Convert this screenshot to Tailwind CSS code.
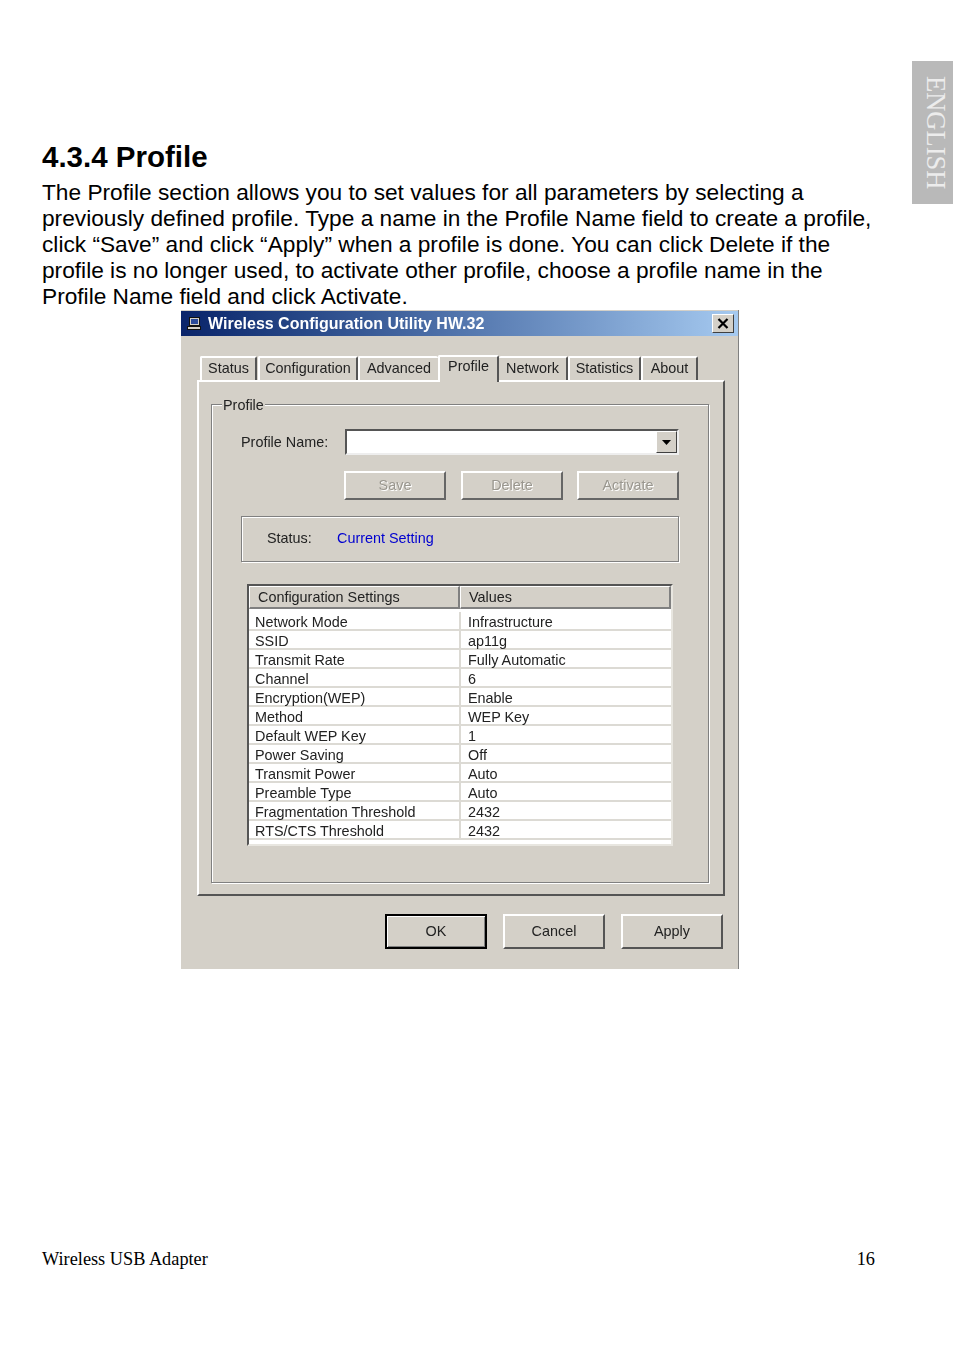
<!DOCTYPE html>
<html lang="en">
<head>
    <meta charset="UTF-8">
    <title>4.3.4 Profile</title>
    <script src="https://cdn.jsdelivr.net/npm/@tailwindcss/browser@4"></script>
</head>
<body class="bg-white">
    <div class="relative w-[954px] h-[1351px] overflow-hidden pl-[42px] pr-[79px] pt-[136px] font-['Liberation_Sans',sans-serif] text-black">
        <!-- side tab -->
        <div class="absolute top-[61px] right-[1px] w-[41px] h-[143px] bg-[#b9b9b9] flex justify-start pt-[15px] pr-[4px] text-[#ececec] text-[26.5px] leading-none font-['Liberation_Serif',serif] [writing-mode:vertical-rl]">ENGLISH</div>

        <h1 class="text-[29.5px] leading-[42px] font-bold mb-[1px]">4.3.4 Profile</h1>
        <p class="text-[22.7px] leading-[26px] whitespace-nowrap">The Profile section allows you to set values for all parameters by selecting a<br>previously defined profile. Type a name in the Profile Name field to create a profile,<br>click “Save” and click “Apply” when a profile is done. You can click Delete if the<br>profile is no longer used, to activate other profile, choose a profile name in the<br>Profile Name field and click Activate.</p>

        <!-- dialog -->
        <div class="mt-px ml-[139px] w-[558px] h-[659px] bg-[#d4d0c8] border-r border-[#808080] pt-px text-[14.4px] leading-[21px] text-[#222] blur-[0.35px]">
            <div class="h-[25px] flex items-center pl-[5px] pr-[4px] bg-gradient-to-r from-[#0a246a] to-[#a6caf0]">
                <svg width="17" height="16" viewBox="0 0 17 16" class="mr-[5px]">
                    <rect x="3.5" y="1.5" width="10" height="8" fill="#d4d0c8" stroke="#111"/>
                    <rect x="5" y="3" width="7" height="5" fill="#2a4a9a"/>
                    <rect x="1.5" y="10.5" width="13" height="3" fill="#d4d0c8" stroke="#111"/>
                </svg>
                <span class="text-[16px] font-bold text-white">Wireless Configuration Utility HW.32</span>
                <div class="ml-auto w-[22px] h-[19px] bg-[#d4d0c8] border border-t-white border-l-white border-r-[#404040] border-b-[#404040] flex items-center justify-center">
                    <svg width="12" height="11" viewBox="0 0 12 11"><path d="M1.5 1 L10.5 10 M10.5 1 L1.5 10" stroke="#000" stroke-width="2.2" fill="none"/></svg>
                </div>
            </div>

            <!-- tabs -->
            <div class="h-[44px] flex items-end pl-[19px] relative z-10">
                <div class="w-[57px] h-[24px] border-t-2 border-l-2 border-r-2 border-t-white border-l-white border-r-[#555] rounded-t-[2px] text-center">Status</div>
                <div class="ml-px w-[100px] h-[24px] border-t-2 border-l-2 border-r-2 border-t-white border-l-white border-r-[#555] rounded-t-[2px] text-center">Configuration</div>
                <div class="w-[80px] h-[24px] border-t-2 border-l-2 border-t-white border-l-white rounded-t-[2px] text-center">Advanced</div>
                <div class="w-[61px] h-[27px] -mb-[2px] leading-[19px] bg-[#d4d0c8] border-t-2 border-l-2 border-r-2 border-t-white border-l-white border-r-[#555] rounded-t-[2px] text-center">Profile</div>
                <div class="w-[69px] h-[24px] border-t-2 border-r-2 border-t-white border-r-[#555] rounded-t-[2px] text-center">Network</div>
                <div class="w-[73px] h-[24px] border-t-2 border-l-2 border-r-2 border-t-white border-l-white border-r-[#555] rounded-t-[2px] text-center">Statistics</div>
                <div class="w-[57px] h-[24px] border-t-2 border-l-2 border-r-2 border-t-white border-l-white border-r-[#555] rounded-t-[2px] text-center">About</div>
            </div>

            <!-- tab panel -->
            <div class="ml-[16px] w-[528px] h-[516px] border-2 border-t-white border-l-white border-r-[#555] border-b-[#555] pl-[12px] pt-[22px]">
                <!-- group box -->
                <div class="relative w-[498px] h-[479px] border border-[#808080] shadow-[inset_1px_1px_0_#fff,1px_1px_0_#fff] pl-[29px] pt-[24px]">
                    <span class="absolute left-[10px] -top-[10px] px-px bg-[#d4d0c8]">Profile</span>

                    <div class="flex items-center h-[26px]">
                        <span class="w-[104px]">Profile Name:</span>
                        <div class="w-[334px] h-[26px] bg-white border-2 border-t-[#555] border-l-[#555] border-r-[#eee] border-b-[#eee] flex justify-end">
                            <div class="w-[21px] h-[22px] bg-[#d4d0c8] border border-t-white border-l-white border-r-[#404040] border-b-[#404040] flex items-center justify-center">
                                <svg width="9" height="5" viewBox="0 0 9 5"><path d="M0 0 H9 L4.5 5 Z" fill="#000"/></svg>
                            </div>
                        </div>
                    </div>

                    <div class="flex gap-[15px] mt-[16px] ml-[103px] text-[#9a978f]">
                        <div class="w-[102px] h-[29px] border-2 border-t-white border-l-white border-r-[#666] border-b-[#666] flex items-center justify-center [text-shadow:1px_1px_0_#fff]">Save</div>
                        <div class="w-[102px] h-[29px] border-2 border-t-white border-l-white border-r-[#666] border-b-[#666] flex items-center justify-center [text-shadow:1px_1px_0_#fff]">Delete</div>
                        <div class="w-[102px] h-[29px] -ml-px border-2 border-t-white border-l-white border-r-[#666] border-b-[#666] flex items-center justify-center [text-shadow:1px_1px_0_#fff]">Activate</div>
                    </div>

                    <div class="mt-[16px] w-[438px] h-[46px] border border-[#808080] shadow-[inset_1px_1px_0_#fff,1px_1px_0_#fff] flex items-center pl-[25px] pb-[2px]">
                        <span class="w-[70px]">Status:</span>
                        <span class="text-[#0000d0]">Current Setting</span>
                    </div>

                    <!-- settings list -->
                    <div class="mt-[22px] ml-[6px] w-[426px] h-[262px] bg-white border-2 border-t-[#555] border-l-[#555] border-r-[#e8e6e0] border-b-[#e8e6e0]">
                        <div class="flex h-[23px] bg-[#d4d0c8] mb-[3px]">
                            <div class="w-[211px] pl-[8px] border-t border-l border-r-2 border-b-2 border-t-white border-l-white border-r-[#808080] border-b-[#808080]">Configuration Settings</div>
                            <div class="flex-1 pl-[8px] border-t border-l border-r-2 border-b-2 border-t-white border-l-white border-r-[#808080] border-b-[#808080]">Values</div>
                        </div>
                        <div class="flex h-[19px] border-b-2 border-[#dcdad4]"><div class="w-[212px] pl-[6px] border-r-2 border-[#dcdad4]">Network Mode</div><div class="pl-[7px]">Infrastructure</div></div>
                        <div class="flex h-[19px] border-b-2 border-[#dcdad4]"><div class="w-[212px] pl-[6px] border-r-2 border-[#dcdad4]">SSID</div><div class="pl-[7px]">ap11g</div></div>
                        <div class="flex h-[19px] border-b-2 border-[#dcdad4]"><div class="w-[212px] pl-[6px] border-r-2 border-[#dcdad4]">Transmit Rate</div><div class="pl-[7px]">Fully Automatic</div></div>
                        <div class="flex h-[19px] border-b-2 border-[#dcdad4]"><div class="w-[212px] pl-[6px] border-r-2 border-[#dcdad4]">Channel</div><div class="pl-[7px]">6</div></div>
                        <div class="flex h-[19px] border-b-2 border-[#dcdad4]"><div class="w-[212px] pl-[6px] border-r-2 border-[#dcdad4]">Encryption(WEP)</div><div class="pl-[7px]">Enable</div></div>
                        <div class="flex h-[19px] border-b-2 border-[#dcdad4]"><div class="w-[212px] pl-[6px] border-r-2 border-[#dcdad4]">Method</div><div class="pl-[7px]">WEP Key</div></div>
                        <div class="flex h-[19px] border-b-2 border-[#dcdad4]"><div class="w-[212px] pl-[6px] border-r-2 border-[#dcdad4]">Default WEP Key</div><div class="pl-[7px]">1</div></div>
                        <div class="flex h-[19px] border-b-2 border-[#dcdad4]"><div class="w-[212px] pl-[6px] border-r-2 border-[#dcdad4]">Power Saving</div><div class="pl-[7px]">Off</div></div>
                        <div class="flex h-[19px] border-b-2 border-[#dcdad4]"><div class="w-[212px] pl-[6px] border-r-2 border-[#dcdad4]">Transmit Power</div><div class="pl-[7px]">Auto</div></div>
                        <div class="flex h-[19px] border-b-2 border-[#dcdad4]"><div class="w-[212px] pl-[6px] border-r-2 border-[#dcdad4]">Preamble Type</div><div class="pl-[7px]">Auto</div></div>
                        <div class="flex h-[19px] border-b-2 border-[#dcdad4]"><div class="w-[212px] pl-[6px] border-r-2 border-[#dcdad4]">Fragmentation Threshold</div><div class="pl-[7px]">2432</div></div>
                        <div class="flex h-[19px] border-b-2 border-[#dcdad4]"><div class="w-[212px] pl-[6px] border-r-2 border-[#dcdad4]">RTS/CTS Threshold</div><div class="pl-[7px]">2432</div></div>
                    </div>
                </div>
            </div>

            <!-- bottom buttons -->
            <div class="flex gap-[16px] mt-[18px] pl-[204px]">
                <div class="w-[102px] h-[35px] border-2 border-black shadow-[inset_1px_1px_0_#fff,inset_-1px_-1px_0_#808080] flex items-center justify-center">OK</div>
                <div class="w-[102px] h-[35px] border-2 border-t-white border-l-white border-r-[#555] border-b-[#555] flex items-center justify-center">Cancel</div>
                <div class="w-[102px] h-[35px] border-2 border-t-white border-l-white border-r-[#555] border-b-[#555] flex items-center justify-center">Apply</div>
            </div>
        </div>

        <div class="mt-[278px] flex justify-between font-['Liberation_Serif',serif] text-[18.3px] leading-[24px]">
            <span>Wireless USB Adapter</span>
            <span>16</span>
        </div>
    </div>
</body>
</html>
